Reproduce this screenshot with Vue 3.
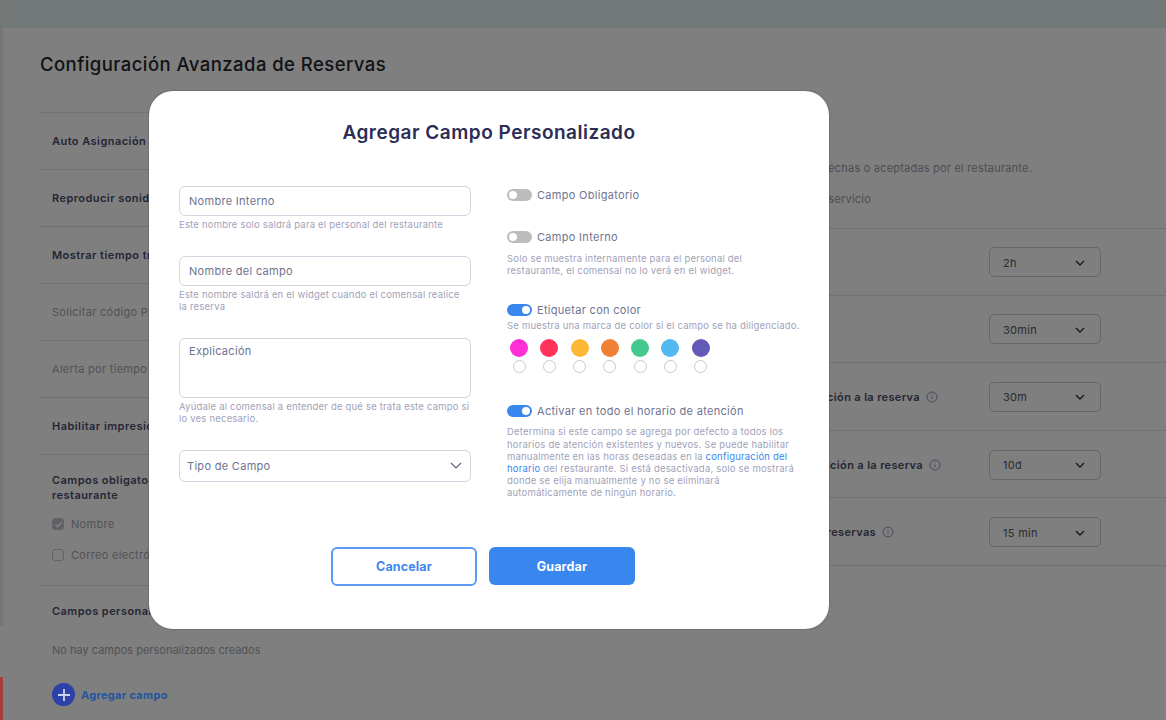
<template>
  <div class="page">
    <div class="side-strip"></div>
    <div class="side-mark"></div>
    <div class="topbar"></div>
    <main class="content">
      <h1 class="page-title">Configuración Avanzada de Reservas</h1>
      <div class="columns">
        <section class="col-left">
          <div v-for="row in leftRows" :key="row.text" class="left-row" :class="{ strong: row.strong }">{{ row.text }}</div>
          <div class="left-block">
            <div class="block-title">Campos obligatorios para el<br />restaurante</div>
            <label class="check-row"><span class="check on"><svg width="9" height="9" viewBox="0 0 10 10"><path d="M1.5 5.2l2.4 2.4 4.6-5" fill="none" stroke="#fff" stroke-width="1.8" /></svg></span>Nombre</label>
            <label class="check-row"><span class="check"></span>Correo electrónico</label>
          </div>
          <div class="custom-block">
            <div class="block-title">Campos personalizados</div>
            <p class="empty">No hay campos personalizados creados</p>
            <a class="add-link">
              <span class="add-icon"><svg width="14" height="14" viewBox="0 0 14 14"><path d="M7 1v12M1 7h12" stroke="#cdd3ea" stroke-width="1.8" /></svg></span>
              Agregar campo
            </a>
          </div>
        </section>
        <section class="col-right">
          <div class="note first"><span>Notificaciones para reservas hechas o aceptadas por el restaurante.</span></div>
          <div class="note second"><span>Reservas por servicio</span></div>
          <div v-for="row in rightRows" :key="row.value" class="right-row">
            <span class="right-label" :style="{ marginRight: row.gap + 'px' }">
              {{ row.label }}
              <svg v-if="row.info" class="info" width="12" height="12" viewBox="0 0 12 12">
                <circle cx="6" cy="6" r="5" fill="none" stroke="#8f94c4" />
                <path d="M6 5.3v3M6 3.2v1" stroke="#8f94c4" />
              </svg>
            </span>
            <span class="small-select">
              {{ row.value }}
              <svg width="10" height="6" viewBox="0 0 10 6"><path d="M1 1l4 4 4-4" fill="none" stroke="#333" stroke-width="1.4" /></svg>
            </span>
          </div>
        </section>
      </div>
    </main>

    <div class="overlay">
      <div class="modal">
        <h2 class="modal-title">Agregar Campo Personalizado</h2>
        <div class="modal-grid">
          <div class="form-col">
            <div class="input first-input">Nombre Interno</div>
            <p class="hint">Este nombre solo saldrá para el personal del restaurante</p>
            <div class="input second-input">Nombre del campo</div>
            <p class="hint">Este nombre saldrá en el widget cuando el comensal realice<br />la reserva</p>
            <div class="input area">Explicación</div>
            <p class="hint">Ayúdale al comensal a entender de qué se trata este campo si<br />lo ves necesario.</p>
            <div class="input type-select">
              Tipo de Campo
              <svg width="12" height="7" viewBox="0 0 12 7"><path d="M1 1l5 5 5-5" fill="none" stroke="#5f6478" stroke-width="1.2" /></svg>
            </div>
          </div>
          <div class="options-col">
            <div class="toggle-row"><span class="toggle"></span>Campo Obligatorio</div>
            <div class="toggle-row row-internal"><span class="toggle"></span>Campo Interno</div>
            <p class="hint tight">Solo se muestra internamente para el personal del<br />restaurante, el comensal no lo verá en el widget.</p>
            <div class="toggle-row row-color"><span class="toggle on"></span>Etiquetar con color</div>
            <p class="hint color-hint">Se muestra una marca de color si el campo se ha diligenciado.</p>
            <div class="swatches">
              <div v-for="color in colors" :key="color" class="swatch">
                <span class="dot" :style="{ background: color }"></span>
                <span class="radio"></span>
              </div>
            </div>
            <div class="toggle-row row-all"><span class="toggle on"></span>Activar en todo el horario de atención</div>
            <p class="hint long">Determina si este campo se agrega por defecto a todos los<br />horarios de atención existentes y nuevos. Se puede habilitar<br />manualmente en las horas deseadas en la <a>configuración del</a><br /><a>horario</a> del restaurante. Si está desactivada, solo se mostrará<br />donde se elija manualmente y no se eliminará<br />automáticamente de ningún horario.</p>
          </div>
        </div>
        <div class="actions">
          <button class="btn outline">Cancelar</button>
          <button class="btn solid">Guardar</button>
        </div>
      </div>
    </div>
  </div>
</template>

<script setup>
const leftRows = [
  { text: 'Auto Asignación de mesas', strong: true },
  { text: 'Reproducir sonido de alerta', strong: true },
  { text: 'Mostrar tiempo transcurrido', strong: true },
  { text: 'Solicitar código PIN', strong: false },
  { text: 'Alerta por tiempo de espera', strong: false },
  { text: 'Habilitar impresión de reservas', strong: true }
]

const rightRows = [
  { label: '', value: '2h', gap: 0, info: false },
  { label: '', value: '30min', gap: 0, info: false },
  { label: 'Tiempo mínimo de anticipación a la reserva', value: '30m', gap: 51, info: true },
  { label: 'Tiempo máximo de anticipación a la reserva', value: '10d', gap: 48, info: true },
  { label: 'Intervalo entre reservas', value: '15 min', gap: 95, info: true }
]

const colors = ['#ff2fd6', '#ff3358', '#ffb833', '#ee8133', '#43c98f', '#52b8f0', '#635ab8']
</script>

<style scoped>
.page {
  position: relative;
  width: 1166px;
  height: 720px;
  overflow: hidden;
  background: #fff;
  font-family: Inter, "Open Sans", sans-serif;
}

.side-strip {
  position: absolute;
  left: 0;
  top: 0;
  width: 3px;
  height: 626px;
  background: #ececec;
}

.side-mark {
  position: absolute;
  z-index: 1;
  left: 0;
  top: 677px;
  width: 3px;
  height: 43px;
  background: #a63c3c;
}

.topbar {
  height: 28px;
  background: #e6f0f0;
}

.content {
  padding-left: 40px;
}

.page-title {
  margin: 0;
  height: 84px;
  padding-top: 24px;
  box-sizing: border-box;
  font-size: 18.5px;
  line-height: 24px;
  font-weight: 500;
  letter-spacing: 0.44px;
  color: #24262c;
}

.columns {
  display: grid;
  grid-template-columns: 380px 746px;
}

.left-row {
  height: 57px;
  display: flex;
  align-items: center;
  border-top: 1px solid #e4e4e6;
  box-sizing: border-box;
  padding-left: 12px;
  font-size: 11px;
  white-space: nowrap;
  color: #a4a4ae;
  letter-spacing: 0.3px;
}

.left-row.strong {
  font-weight: 600;
  color: #4a4c6a;
  letter-spacing: 0.45px;
}

.left-block {
  height: 131px;
  box-sizing: border-box;
  padding: 18px 0 0 12px;
  border-top: 1px solid #e4e4e6;
}

.block-title {
  font-size: 11px;
  line-height: 15px;
  font-weight: 600;
  color: #4a4c6a;
  letter-spacing: 0.45px;
  white-space: nowrap;
}

.check-row {
  display: flex;
  align-items: center;
  gap: 7px;
  margin-top: 13px;
  height: 16px;
  font-size: 11px;
  color: #a4a4ae;
  letter-spacing: 0.3px;
  white-space: nowrap;
}

.check-row + .check-row {
  margin-top: 15px;
}

.check {
  flex: none;
  width: 12px;
  height: 12px;
  box-sizing: border-box;
  border: 1px solid #c8c8cc;
  border-radius: 3px;
  display: flex;
  align-items: center;
  justify-content: center;
}

.check.on {
  background: #c0c0c8;
}

.custom-block {
  padding: 18px 0 0 12px;
  border-top: 1px solid #e4e4e6;
}

.empty {
  margin: 24px 0 0;
  font-size: 11px;
  line-height: 15px;
  color: #a4a4ae;
}

.add-link {
  position: relative;
  z-index: 1;
  display: flex;
  align-items: center;
  gap: 6px;
  margin-top: 25px;
  font-size: 11px;
  font-weight: 700;
  letter-spacing: 0.3px;
  color: #24559f;
}

.add-icon {
  width: 23px;
  height: 23px;
  border-radius: 50%;
  background: #2d41a8;
  display: flex;
  align-items: center;
  justify-content: center;
}

.note {
  display: flex;
  justify-content: flex-end;
  white-space: nowrap;
  font-size: 11px;
  line-height: 15px;
  color: #9a9aa6;
  letter-spacing: 0.2px;
}

.note span {
  flex: none;
}

.note.first {
  margin-top: 49px;
  padding-right: 134px;
}

.note.second {
  margin-top: 16px;
  padding-right: 295px;
}

.right-row {
  height: 67.6px;
  box-sizing: border-box;
  border-bottom: 1px solid #e4e4e6;
  padding: 1px 65px 0 0;
  display: flex;
  align-items: center;
  justify-content: flex-end;
}

.note.second + .right-row {
  border-top: 1px solid #e4e4e6;
  margin-top: 21px;
}

.right-label {
  flex: none;
  display: inline-flex;
  align-items: center;
  gap: 6px;
  font-size: 11px;
  font-weight: 600;
  letter-spacing: 0.35px;
  color: #4a4c6a;
  white-space: nowrap;
}

.small-select {
  flex: none;
  width: 112px;
  height: 30px;
  box-sizing: border-box;
  border: 1px solid #ccc;
  border-radius: 5px;
  padding: 1px 15px 0 13px;
  display: flex;
  align-items: center;
  justify-content: space-between;
  font-size: 11px;
  letter-spacing: 0.3px;
  color: #55555f;
}

.overlay {
  position: absolute;
  inset: 0;
  background: rgba(0, 0, 0, 0.5);
}

.modal {
  position: absolute;
  z-index: 2;
  left: 149px;
  top: 91px;
  width: 680px;
  height: 538px;
  box-sizing: border-box;
  background: #fff;
  border-radius: 24px;
  padding: 30px 30px 0;
  box-shadow: 0 0 2px rgba(0, 0, 0, 0.4);
}

.modal-title {
  margin: 0;
  text-align: center;
  font-size: 19px;
  line-height: 24px;
  font-weight: 600;
  letter-spacing: 0.5px;
  color: #2b2d55;
}

.modal-grid {
  display: grid;
  grid-template-columns: 292px 300px;
  column-gap: 36px;
  margin-top: 41px;
}

.input {
  height: 30px;
  box-sizing: border-box;
  border: 1px solid #d4d5e2;
  border-radius: 6px;
  padding: 0 9px;
  display: flex;
  align-items: center;
  font-size: 11px;
  letter-spacing: 0.3px;
  color: #6e7390;
}

.second-input {
  margin-top: 24.5px;
  height: 30.5px;
}

.area {
  margin-top: 24.5px;
  height: 60.5px;
  align-items: flex-start;
  padding-top: 5px;
}

.type-select {
  margin-top: 24.5px;
  height: 32.5px;
  padding: 0 8px 0 7px;
  justify-content: space-between;
}

.hint {
  margin: 3px 0 0;
  font-size: 9.5px;
  line-height: 12px;
  letter-spacing: 0.2px;
  color: #9fa2b8;
}

.toggle-row {
  display: flex;
  align-items: center;
  gap: 5px;
  height: 14px;
  font-size: 11px;
  letter-spacing: 0.3px;
  color: #6e7390;
}

.options-col {
  padding-top: 2px;
}

.toggle {
  position: relative;
  width: 25px;
  height: 12px;
  border-radius: 6px;
  background: #bdbbbb;
}

.toggle::after {
  content: "";
  position: absolute;
  left: 2px;
  top: 2px;
  width: 8px;
  height: 8px;
  border-radius: 50%;
  background: #fff;
}

.toggle.on {
  background: #3a86ef;
}

.toggle.on::after {
  left: auto;
  right: 2px;
}

.row-internal {
  margin-top: 28px;
}

.tight {
  margin-top: 9px;
  line-height: 12.2px;
}

.long {
  margin-top: 8px;
  line-height: 12.2px;
}

.row-color {
  margin-top: 26px;
}

.color-hint {
  margin-top: 3px;
}

.swatches {
  display: flex;
  gap: 12.3px;
  margin: 7px 0 0 3px;
}

.swatch {
  display: flex;
  flex-direction: column;
  align-items: center;
  gap: 3px;
  width: 18px;
}

.dot {
  width: 18px;
  height: 18px;
  border-radius: 50%;
}

.radio {
  width: 13px;
  height: 13px;
  box-sizing: border-box;
  border: 1px solid #c9c9c9;
  border-radius: 50%;
}

.row-all {
  margin-top: 31px;
}

.hint a {
  color: #3a86ef;
}

.actions {
  position: absolute;
  left: 182px;
  top: 456px;
  display: flex;
  gap: 12px;
  align-items: flex-start;
}

.btn {
  width: 146px;
  height: 38px;
  border-radius: 6px;
  font-family: inherit;
  font-size: 12.5px;
  font-weight: 700;
  letter-spacing: 0.15px;
  cursor: pointer;
}

.outline {
  height: 39px;
  background: #fff;
  color: #3f89ee;
  border: 2px solid #5b9bf2;
}

.solid {
  background: #3a86ef;
  color: #fff;
  border: none;
}

.info {
  flex: none;
}
</style>
